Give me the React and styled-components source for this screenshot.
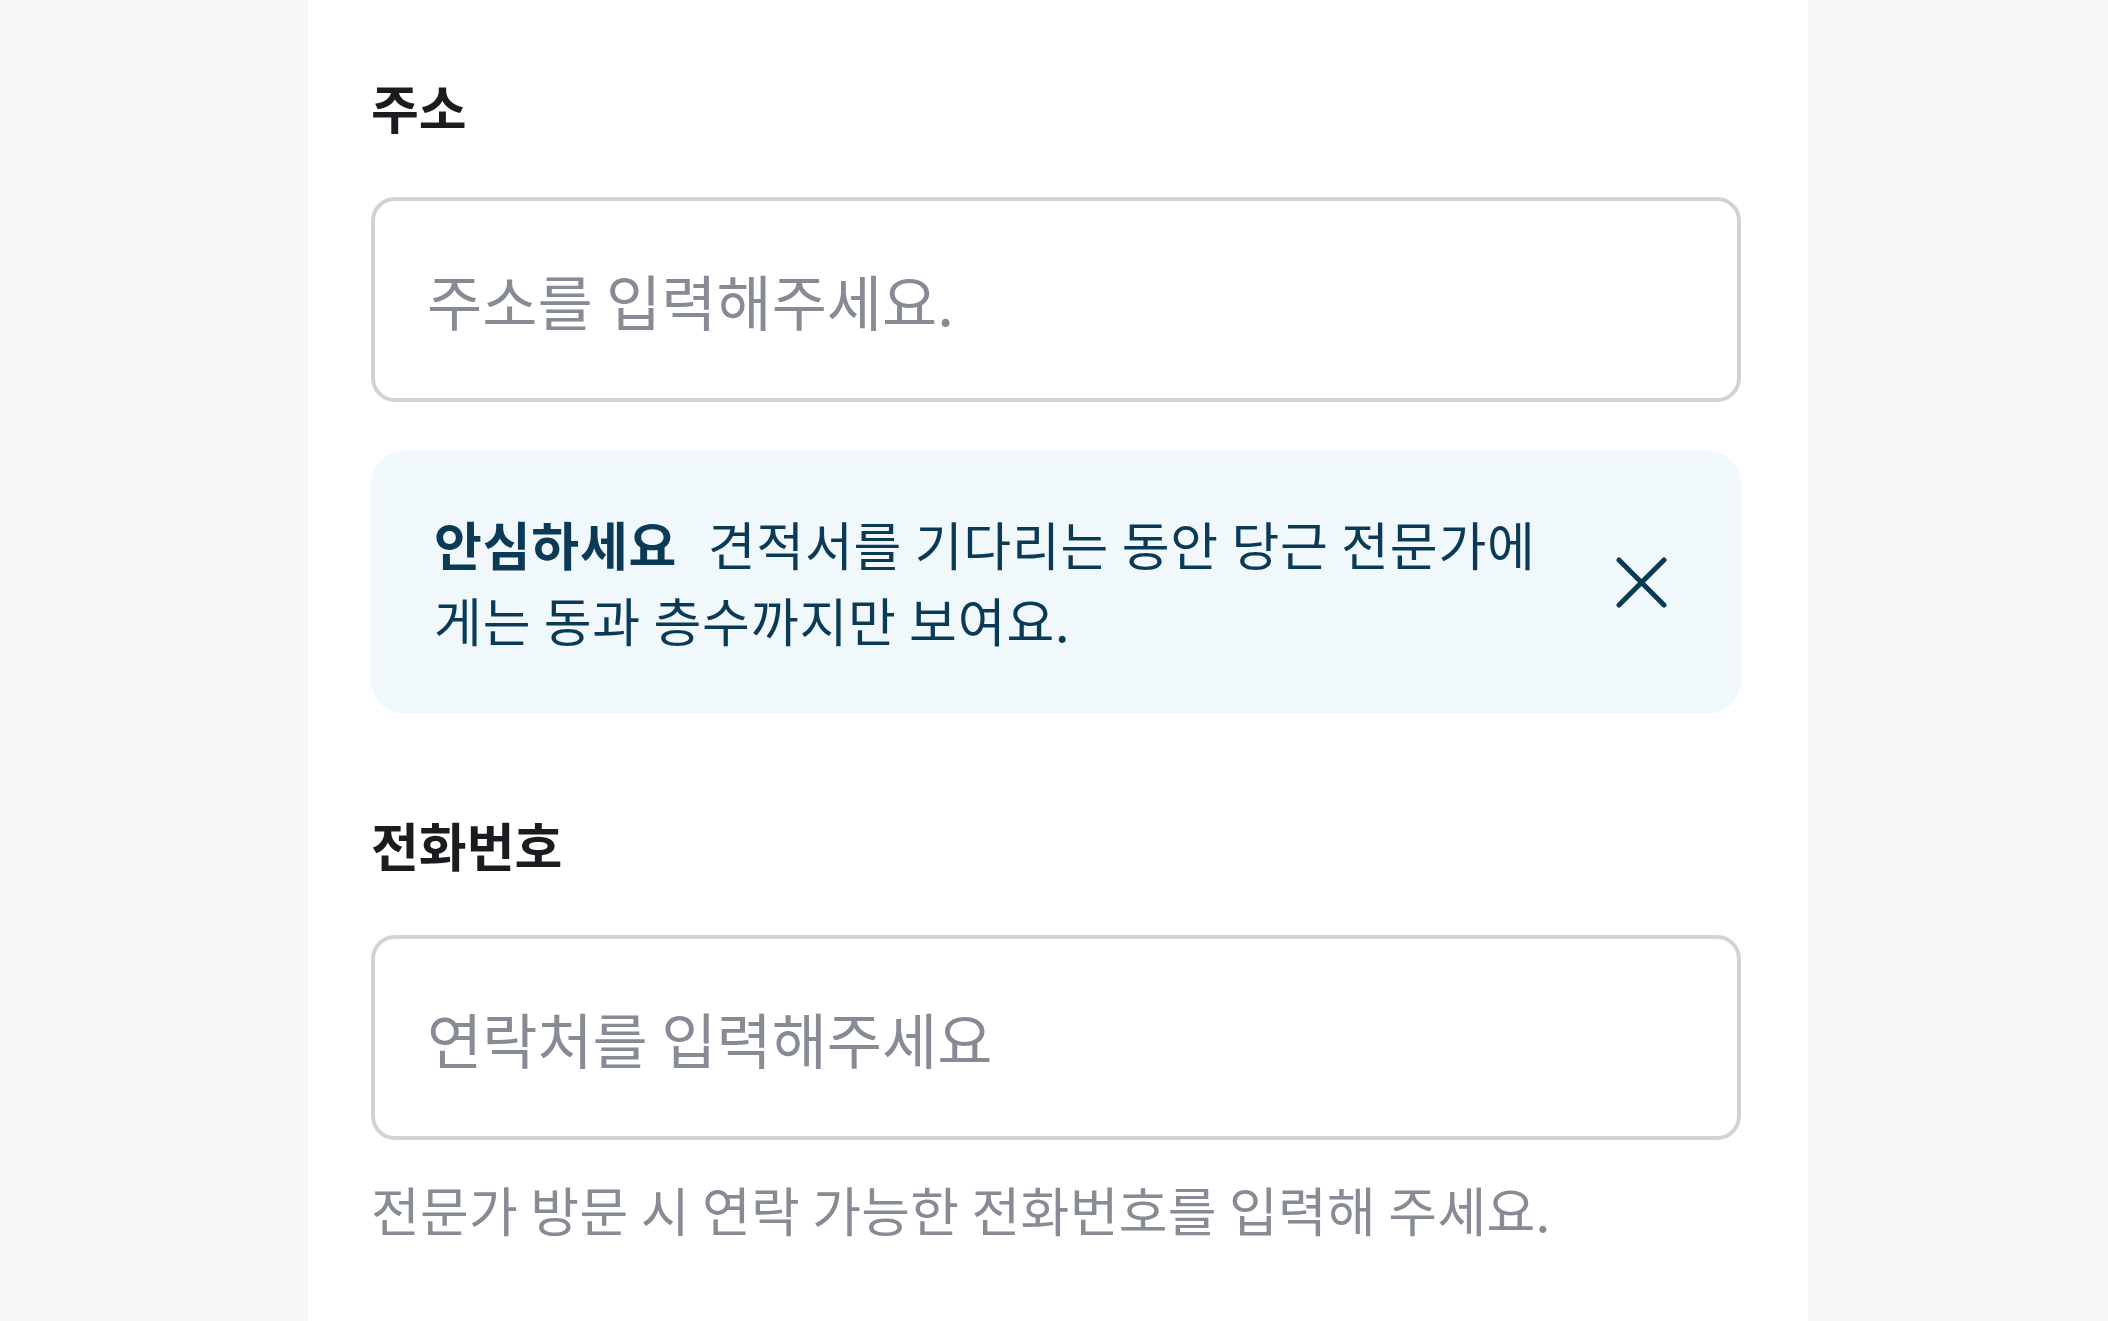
import styled, { createGlobalStyle } from "styled-components";

const GlobalStyle = createGlobalStyle`
  body {
    margin: 0;
    background: #f6f7f9;
    font-family: "Noto Sans CJK KR", "Noto Sans", sans-serif;
  }
`;

const Page = styled.div`
  display: flex;
  justify-content: center;
  min-height: 100vh;
  padding-left: 8px;
`;

const Panel = styled.div`
  box-sizing: border-box;
  width: 1500px;
  min-height: 100vh;
  background: #fff;
  padding: 75px 67px 0 63px;
  display: flex;
  flex-direction: column;
`;

const Label = styled.label`
  display: block;
  font-size: 52px;
  line-height: 64px;
  font-weight: 700;
  color: #1a1c20;
  margin-top: ${(p) => (p.$spaced ? "100px" : "0")};
  margin-bottom: 58px;
`;

const Field = styled.input`
  box-sizing: border-box;
  width: 100%;
  height: 205px;
  border: 4px solid #d1d3d8;
  border-radius: 24px;
  padding: 0 52px;
  font-family: inherit;
  font-size: 60px;
  color: #1a1c20;
  background: #fff;
  outline: none;

  &::placeholder {
    color: #868b94;
  }
`;

const Notice = styled.div`
  margin-top: 49px;
  display: flex;
  align-items: center;
  gap: 52px;
  padding: 55px 74px 55px 63px;
  background: #f1f8fc;
  border-radius: 32px;
  color: #0b3a57;
`;

const NoticeText = styled.p`
  flex: 1;
  margin: 0;
  font-size: 52px;
  line-height: 76px;
  letter-spacing: 0.8px;
`;

const Strong = styled.strong`
  font-weight: 700;
  margin-right: 18px;
`;

const CloseButton = styled.button`
  flex-shrink: 0;
  display: flex;
  align-items: center;
  justify-content: center;
  width: 51px;
  height: 51px;
  padding: 0;
  border: none;
  background: none;
  color: #0b3a57;
  cursor: pointer;
`;

const Helper = styled.p`
  margin: 37px 0 0;
  font-size: 53px;
  line-height: 64px;
  letter-spacing: 0.3px;
  color: #868b94;
`;

const CloseIcon = () => (
  <svg width="51" height="51" viewBox="0 0 51 51" fill="none">
    <path
      d="M3 3L48 48M48 3L3 48"
      stroke="currentColor"
      strokeWidth="5"
      strokeLinecap="round"
    />
  </svg>
);

export default function App() {
  return (
    <>
      <GlobalStyle />
      <Page>
        <Panel>
          <Label>주소</Label>
          <Field placeholder="주소를 입력해주세요." />
          <Notice>
            <NoticeText>
              <Strong>안심하세요</Strong> 견적서를 기다리는 동안 당근 전문가에게는 동과 층수까지만 보여요.
            </NoticeText>
            <CloseButton aria-label="닫기">
              <CloseIcon />
            </CloseButton>
          </Notice>
          <Label $spaced>전화번호</Label>
          <Field placeholder="연락처를 입력해주세요" />
          <Helper>전문가 방문 시 연락 가능한 전화번호를 입력해 주세요.</Helper>
        </Panel>
      </Page>
    </>
  );
}
